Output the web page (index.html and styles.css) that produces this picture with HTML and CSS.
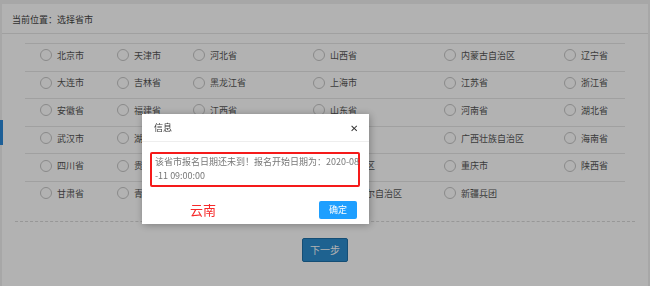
FILE: index.html
```html
<!DOCTYPE html>
<html lang="zh-CN">
<head>
  <meta charset="UTF-8">
  <title>选择省市</title>
  <link rel="stylesheet" href="styles.css">
</head>
<body>
  <div class="side-tab"></div>

  <div class="panel">
    <div class="panel-header">当前位置：选择省市</div>
    <div class="panel-body">
      <div class="province-table">
        <div class="row">
          <label class="item"><span class="radio"></span>北京市</label>
          <label class="item"><span class="radio"></span>天津市</label>
          <label class="item"><span class="radio"></span>河北省</label>
          <label class="item"><span class="radio"></span>山西省</label>
          <label class="item"><span class="radio"></span>内蒙古自治区</label>
          <label class="item"><span class="radio"></span>辽宁省</label>
        </div>
        <div class="row">
          <label class="item"><span class="radio"></span>大连市</label>
          <label class="item"><span class="radio"></span>吉林省</label>
          <label class="item"><span class="radio"></span>黑龙江省</label>
          <label class="item"><span class="radio"></span>上海市</label>
          <label class="item"><span class="radio"></span>江苏省</label>
          <label class="item"><span class="radio"></span>浙江省</label>
        </div>
        <div class="row">
          <label class="item"><span class="radio"></span>安徽省</label>
          <label class="item"><span class="radio"></span>福建省</label>
          <label class="item"><span class="radio"></span>江西省</label>
          <label class="item"><span class="radio"></span>山东省</label>
          <label class="item"><span class="radio"></span>河南省</label>
          <label class="item"><span class="radio"></span>湖北省</label>
        </div>
        <div class="row">
          <label class="item"><span class="radio"></span>武汉市</label>
          <label class="item"><span class="radio"></span>湖南省</label>
          <label class="item"><span class="radio"></span>广东省</label>
          <label class="item"><span class="radio"></span>深圳市</label>
          <label class="item"><span class="radio"></span>广西壮族自治区</label>
          <label class="item"><span class="radio"></span>海南省</label>
        </div>
        <div class="row">
          <label class="item"><span class="radio"></span>四川省</label>
          <label class="item"><span class="radio"></span>贵州省</label>
          <label class="item"><span class="radio"></span>云南省</label>
          <label class="item"><span class="radio"></span>西藏自治区</label>
          <label class="item"><span class="radio"></span>重庆市</label>
          <label class="item"><span class="radio"></span>陕西省</label>
        </div>
        <div class="row">
          <label class="item"><span class="radio"></span>甘肃省</label>
          <label class="item"><span class="radio"></span>青海省</label>
          <label class="item"><span class="radio"></span>宁夏回族自治区</label>
          <label class="item"><span class="radio"></span>新疆维吾尔自治区</label>
          <label class="item"><span class="radio"></span>新疆兵团</label>
        </div>
      </div>
      <div class="actions">
        <button class="btn-next">下一步</button>
      </div>
    </div>
  </div>

  <!-- layer shade + dialog -->
  <div class="shade"></div>
  <div class="dialog">
    <div class="dialog-title">
      <span>信息</span>
      <span class="dialog-close">&#x2715;</span>
    </div>
    <div class="dialog-content">
      <div class="msg-box">该省市报名日期还未到！报名开始日期为：2020-08<br>-11 09:00:00</div>
    </div>
    <div class="dialog-footer">
      <span class="note">云南</span>
      <button class="btn-ok">确定</button>
    </div>
  </div>
</body>
</html>
```

FILE: styles.css
```css
/* === BASE === */
body {
  margin: 0;
  padding: 4px 2px 0 2px;
  background-color: #f0f0f0;
  font-family: "Noto Sans CJK SC", "Liberation Sans", sans-serif;
  font-size: 9px;
  color: #555;
  overflow: hidden;
  height: 282px;
}
.side-tab {
  position: fixed;
  left: 0;
  top: 120px;
  width: 3px;
  height: 25px;
  background-color: #2a88d8;
}

/* === PANEL === */
.panel {
  background-color: #fff;
  height: 100%;
}
.panel-header {
  height: 29px;
  line-height: 31px;
  padding-left: 10px;
  color: #444;
  border-bottom: 1px solid #e6e6e6;
}
.panel-body {
  padding: 9px 13px 0 13px;
}
.province-table {
  padding-bottom: 12px;
  border-bottom: 1px dashed #d8d8d8;
}
.row {
  display: grid;
  grid-template-columns: 77px 76px 120px 131px 120px 76px;
  height: 27.6px;
  border-top: 1px solid #e6e6e6;
  margin: 0 10px;
  box-sizing: border-box;
}
.item {
  display: flex;
  align-items: center;
  padding-left: 15px;
  padding-bottom: 4px;
  color: #555;
  white-space: nowrap;
}
.radio {
  width: 10px;
  height: 10px;
  border: 1px solid #c6c6c6;
  border-radius: 50%;
  margin-right: 5px;
  flex-shrink: 0;
}
.actions {
  display: flex;
  justify-content: center;
  padding-top: 16px;
}
.btn-next {
  width: 46px;
  height: 24px;
  padding: 0;
  border: 1px solid #1f70a8;
  border-radius: 2px;
  background-color: #2b8dcf;
  color: #fff;
  font-family: "Noto Sans CJK SC", sans-serif;
  font-size: 10px;
}

/* === LAYER DIALOG === */
.shade {
  position: fixed;
  left: 0;
  top: 0;
  right: 0;
  bottom: 0;
  background-color: rgba(0, 0, 0, 0.3);
}
.dialog {
  position: fixed;
  left: 142px;
  top: 114px;
  width: 227px;
  height: 110px;
  background-color: #fff;
  box-shadow: 1px 1px 8px rgba(0, 0, 0, 0.3);
}
.dialog-title {
  display: flex;
  justify-content: space-between;
  align-items: center;
  height: 27px;
  padding: 0 11px 0 12px;
  border-bottom: 1px solid #eee;
  color: #333;
}
.dialog-close {
  font-size: 10px;
  color: #333;
}
.dialog-content {
  padding: 10px 9px 0 8px;
}
.msg-box {
  border: 2px solid #f51a1a;
  border-radius: 2px;
  padding: 1px 3px 2px 3px;
  line-height: 14px;
  color: #777;
  white-space: nowrap;
}
.dialog-footer {
  display: flex;
  justify-content: space-between;
  align-items: center;
  padding: 13px 12px 0 48px;
}
.note {
  font-size: 13px;
  color: #f62a2a;
}
.btn-ok {
  width: 38px;
  height: 18px;
  padding: 0;
  border: none;
  border-radius: 2px;
  background-color: #1e9fff;
  color: #fff;
  font-family: "Noto Sans CJK SC", sans-serif;
  font-size: 9px;
}
```
